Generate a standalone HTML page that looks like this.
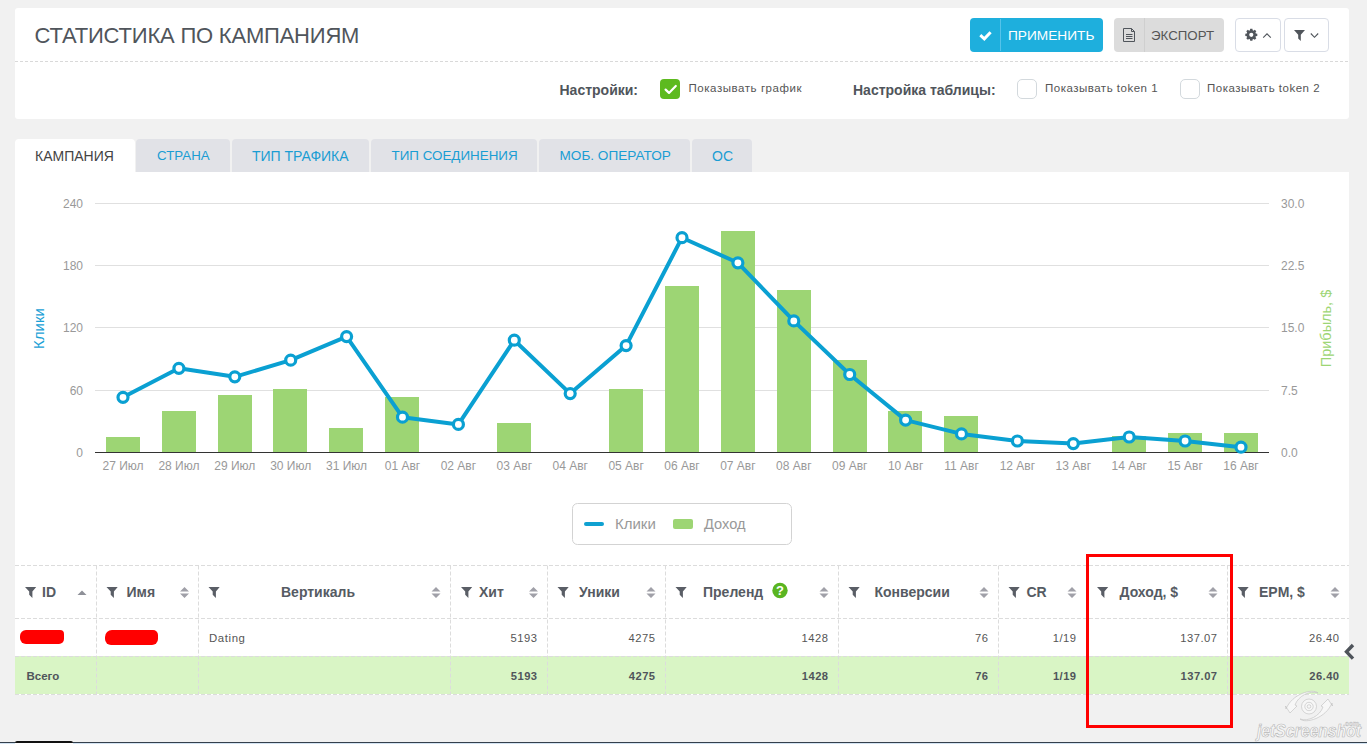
<!DOCTYPE html>
<html><head><meta charset="utf-8">
<style>
*{margin:0;padding:0;box-sizing:border-box}
html,body{width:1367px;height:744px;overflow:hidden}
body{background:#f1f1f1;font-family:"Liberation Sans",sans-serif;position:relative;color:#555}
.a{position:absolute;white-space:nowrap}
.panel{position:absolute;background:#fff}
.t{position:absolute;white-space:nowrap;line-height:1}
</style></head><body>

<!-- top panel -->
<div class="panel" style="left:15px;top:8px;width:1334px;height:111px;border-radius:3px"></div>
<div class="t" style="left:34.5px;top:25px;font-size:22px;letter-spacing:-0.2px;color:#50555b">СТАТИСТИКА ПО КАМПАНИЯМ</div>
<div class="a" style="left:15px;top:61px;width:1334px;height:1px;background-image:linear-gradient(90deg,#d9d9d9 3px,transparent 3px);background-size:5px 1px"></div>

<!-- apply button -->
<div class="a" style="left:970px;top:18px;width:133px;height:34px;background:#1eafdd;border-radius:4px"></div>
<div class="a" style="left:1000px;top:19px;width:1px;height:32px;background:#55c3ea"></div>
<svg class="a" style="left:970px;top:18px" width="30" height="34" viewBox="970 18 30 34"><path d="M980.3 35.2 L984.3 38.8 L990.6 32.2" fill="none" stroke="#fff" stroke-width="3"/></svg>
<div class="t" style="left:1008px;top:29px;font-size:13.7px;color:#fff">ПРИМЕНИТЬ</div>

<!-- export -->
<div class="a" style="left:1114px;top:18px;width:110px;height:34px;background:#dcdcdc;border-radius:4px"></div>
<div class="a" style="left:1144px;top:18px;width:1px;height:34px;background:#cfcfcf"></div>
<svg class="a" style="left:1114px;top:18px" width="30" height="34" viewBox="1114 18 30 34"><path d="M1123.5 28.5 H1131.5 L1134.5 31.5 V41.5 H1123.5 Z M1131.5 28.5 V31.5 H1134.5" fill="none" stroke="#50555b" stroke-width="1"/><path d="M1126 34.5H1132.5M1126 36.5H1132.5M1126 38.5H1132.5" stroke="#50555b" stroke-width="1"/></svg>
<div class="t" style="left:1151px;top:29px;font-size:13.3px;color:#555">ЭКСПОРТ</div>

<!-- gear / filter -->
<div class="a" style="left:1235px;top:18px;width:46px;height:34px;border:1px solid #d9dde6;border-radius:4px;background:#fff"></div>
<div class="a" style="left:1284px;top:18px;width:45px;height:34px;border:1px solid #d9dde6;border-radius:4px;background:#fff"></div>
<svg class="a" style="left:1235px;top:18px" width="94" height="34" viewBox="1235 18 94 34"><path d="M1255.79 33.41 L1257.30 33.71 L1257.30 35.89 L1255.79 36.19 L1255.46 36.99 L1256.32 38.27 L1254.77 39.82 L1253.49 38.96 L1252.69 39.29 L1252.39 40.80 L1250.21 40.80 L1249.91 39.29 L1249.11 38.96 L1247.83 39.82 L1246.28 38.27 L1247.14 36.99 L1246.81 36.19 L1245.30 35.89 L1245.30 33.71 L1246.81 33.41 L1247.14 32.61 L1246.28 31.33 L1247.83 29.78 L1249.11 30.64 L1249.91 30.31 L1250.21 28.80 L1252.39 28.80 L1252.69 30.31 L1253.49 30.64 L1254.77 29.78 L1256.32 31.33 L1255.46 32.61 Z M1253.40 34.80 A2.1 2.1 0 1 0 1249.20 34.80 A2.1 2.1 0 1 0 1253.40 34.80 Z" fill="#50555b" fill-rule="evenodd"/><path d="M1263.2 37.6 L1267 33.8 L1270.8 37.6" fill="none" stroke="#50555b" stroke-width="1.1"/><path d="M1294 30 H1305 L1300.8 34.8 V41 L1298.2 38.6 V34.8 Z" fill="#50555b"/><path d="M1310.8 33.5 L1314.5 37.3 L1318.2 33.5" fill="none" stroke="#50555b" stroke-width="1.1"/></svg>

<!-- settings row -->
<div class="t" style="left:559.5px;top:83px;font-size:14px;font-weight:bold;color:#50555b">Настройки:</div>
<div class="a" style="left:660px;top:79px;width:20px;height:20px;background:#5dba1f;border-radius:4px"></div>
<svg class="a" style="left:660px;top:79px" width="20" height="20" viewBox="0 0 20 20"><path d="M5.6 10.6 L9 13.9 L15.8 7" fill="none" stroke="#fff" stroke-width="2.2" stroke-linecap="round" stroke-linejoin="round"/></svg>
<div class="t" style="left:688.5px;top:82.5px;font-size:11.5px;letter-spacing:0.55px;color:#555">Показывать график</div>

<div class="t" style="left:853px;top:83px;font-size:14px;font-weight:bold;color:#50555b">Настройка таблицы:</div>
<div class="a" style="left:1017px;top:79px;width:20px;height:20px;border:1.3px solid #d3d9dd;border-radius:5px;background:#fff"></div>
<div class="t" style="left:1045px;top:82.5px;font-size:11.5px;letter-spacing:0.5px;color:#555">Показывать token 1</div>
<div class="a" style="left:1180px;top:79px;width:20px;height:20px;border:1.3px solid #d3d9dd;border-radius:5px;background:#fff"></div>
<div class="t" style="left:1207px;top:82.5px;font-size:11.5px;letter-spacing:0.5px;color:#555">Показывать token 2</div>

<!-- tabs -->
<div class="panel" style="left:15px;top:139px;width:119.5px;height:34px;border-radius:4px 4px 0 0"></div>
<div class="t" style="left:35px;top:149px;font-size:14px;color:#444">КАМПАНИЯ</div>
<div class="a" style="left:136px;top:139px;width:94px;height:34px;background:#e1e2e7;border-radius:4px 4px 0 0"></div>
<div class="t" style="left:157px;top:149px;font-size:13.3px;color:#1a9dd3">СТРАНА</div>
<div class="a" style="left:232px;top:139px;width:137px;height:34px;background:#e1e2e7;border-radius:4px 4px 0 0"></div>
<div class="t" style="left:252px;top:149px;font-size:14px;color:#1a9dd3">ТИП ТРАФИКА</div>
<div class="a" style="left:371px;top:139px;width:166px;height:34px;background:#e1e2e7;border-radius:4px 4px 0 0"></div>
<div class="t" style="left:391.5px;top:149px;font-size:13.4px;color:#1a9dd3">ТИП СОЕДИНЕНИЯ</div>
<div class="a" style="left:539px;top:139px;width:150.5px;height:34px;background:#e1e2e7;border-radius:4px 4px 0 0"></div>
<div class="t" style="left:559.5px;top:149px;font-size:13.6px;color:#1a9dd3">МОБ. ОПЕРАТОР</div>
<div class="a" style="left:692px;top:139px;width:60px;height:34px;background:#e1e2e7;border-radius:4px 4px 0 0"></div>
<div class="t" style="left:712px;top:149px;font-size:14px;color:#1a9dd3">ОС</div>

<!-- main panel -->
<div class="panel" style="left:15px;top:172px;width:1334px;height:522px"></div>

<!--CHART-->
<svg class="a" style="left:0;top:0" width="1367" height="560" viewBox="0 0 1367 560">
<line x1="95" x2="1269" y1="203.5" y2="203.5" stroke="#e0e0e0" stroke-width="1"/>
<line x1="95" x2="1269" y1="265.5" y2="265.5" stroke="#e0e0e0" stroke-width="1"/>
<line x1="95" x2="1269" y1="327.5" y2="327.5" stroke="#e0e0e0" stroke-width="1"/>
<line x1="95" x2="1269" y1="390.5" y2="390.5" stroke="#e0e0e0" stroke-width="1"/>
<rect x="106" y="437" width="34" height="15" fill="#9dd574"/>
<rect x="162" y="411" width="34" height="41" fill="#9dd574"/>
<rect x="218" y="395" width="34" height="57" fill="#9dd574"/>
<rect x="273" y="389" width="34" height="63" fill="#9dd574"/>
<rect x="329" y="428" width="34" height="24" fill="#9dd574"/>
<rect x="385" y="397" width="34" height="55" fill="#9dd574"/>
<rect x="497" y="423" width="34" height="29" fill="#9dd574"/>
<rect x="609" y="389" width="34" height="63" fill="#9dd574"/>
<rect x="665" y="286" width="34" height="166" fill="#9dd574"/>
<rect x="721" y="231" width="34" height="221" fill="#9dd574"/>
<rect x="777" y="290" width="34" height="162" fill="#9dd574"/>
<rect x="833" y="360" width="34" height="92" fill="#9dd574"/>
<rect x="888" y="411" width="34" height="41" fill="#9dd574"/>
<rect x="944" y="416" width="34" height="36" fill="#9dd574"/>
<rect x="1112" y="436" width="34" height="16" fill="#9dd574"/>
<rect x="1168" y="433" width="34" height="19" fill="#9dd574"/>
<rect x="1224" y="433" width="34" height="19" fill="#9dd574"/>
<line x1="95" x2="1269" y1="452.5" y2="452.5" stroke="#333" stroke-width="1"/>
<path d="M123.0 397.3 L178.9 368.3 L234.8 376.8 L290.7 360.2 L346.6 336.6 L402.5 417.2 L458.4 424.4 L514.3 340.2 L570.2 393.6 L626.1 345.6 L682.0 237.7 L737.9 262.8 L793.8 320.9 L849.7 374.5 L905.6 420.1 L961.5 433.9 L1017.4 441.0 L1073.3 443.6 L1129.2 437.0 L1185.1 441.0 L1241.0 447.2" fill="none" stroke="#0aa0d2" stroke-width="4" stroke-linejoin="round" stroke-linecap="round"/>
<circle cx="123.0" cy="397.3" r="5" fill="#fff" stroke="#0aa0d2" stroke-width="3.2"/>
<circle cx="178.9" cy="368.3" r="5" fill="#fff" stroke="#0aa0d2" stroke-width="3.2"/>
<circle cx="234.8" cy="376.8" r="5" fill="#fff" stroke="#0aa0d2" stroke-width="3.2"/>
<circle cx="290.7" cy="360.2" r="5" fill="#fff" stroke="#0aa0d2" stroke-width="3.2"/>
<circle cx="346.6" cy="336.6" r="5" fill="#fff" stroke="#0aa0d2" stroke-width="3.2"/>
<circle cx="402.5" cy="417.2" r="5" fill="#fff" stroke="#0aa0d2" stroke-width="3.2"/>
<circle cx="458.4" cy="424.4" r="5" fill="#fff" stroke="#0aa0d2" stroke-width="3.2"/>
<circle cx="514.3" cy="340.2" r="5" fill="#fff" stroke="#0aa0d2" stroke-width="3.2"/>
<circle cx="570.2" cy="393.6" r="5" fill="#fff" stroke="#0aa0d2" stroke-width="3.2"/>
<circle cx="626.1" cy="345.6" r="5" fill="#fff" stroke="#0aa0d2" stroke-width="3.2"/>
<circle cx="682.0" cy="237.7" r="5" fill="#fff" stroke="#0aa0d2" stroke-width="3.2"/>
<circle cx="737.9" cy="262.8" r="5" fill="#fff" stroke="#0aa0d2" stroke-width="3.2"/>
<circle cx="793.8" cy="320.9" r="5" fill="#fff" stroke="#0aa0d2" stroke-width="3.2"/>
<circle cx="849.7" cy="374.5" r="5" fill="#fff" stroke="#0aa0d2" stroke-width="3.2"/>
<circle cx="905.6" cy="420.1" r="5" fill="#fff" stroke="#0aa0d2" stroke-width="3.2"/>
<circle cx="961.5" cy="433.9" r="5" fill="#fff" stroke="#0aa0d2" stroke-width="3.2"/>
<circle cx="1017.4" cy="441.0" r="5" fill="#fff" stroke="#0aa0d2" stroke-width="3.2"/>
<circle cx="1073.3" cy="443.6" r="5" fill="#fff" stroke="#0aa0d2" stroke-width="3.2"/>
<circle cx="1129.2" cy="437.0" r="5" fill="#fff" stroke="#0aa0d2" stroke-width="3.2"/>
<circle cx="1185.1" cy="441.0" r="5" fill="#fff" stroke="#0aa0d2" stroke-width="3.2"/>
<circle cx="1241.0" cy="447.2" r="5" fill="#fff" stroke="#0aa0d2" stroke-width="3.2"/>
<text x="83" y="208.0" text-anchor="end" font-size="12" fill="#999">240</text>
<text x="1281" y="208.0" font-size="12" fill="#999">30.0</text>
<text x="83" y="270.0" text-anchor="end" font-size="12" fill="#999">180</text>
<text x="1281" y="270.0" font-size="12" fill="#999">22.5</text>
<text x="83" y="332.0" text-anchor="end" font-size="12" fill="#999">120</text>
<text x="1281" y="332.0" font-size="12" fill="#999">15.0</text>
<text x="83" y="395.0" text-anchor="end" font-size="12" fill="#999">60</text>
<text x="1281" y="395.0" font-size="12" fill="#999">7.5</text>
<text x="83" y="457.0" text-anchor="end" font-size="12" fill="#999">0</text>
<text x="1281" y="457.0" font-size="12" fill="#999">0.0</text>
<text x="123.0" y="469.5" text-anchor="middle" font-size="12" fill="#999">27 Июл</text>
<text x="178.9" y="469.5" text-anchor="middle" font-size="12" fill="#999">28 Июл</text>
<text x="234.8" y="469.5" text-anchor="middle" font-size="12" fill="#999">29 Июл</text>
<text x="290.7" y="469.5" text-anchor="middle" font-size="12" fill="#999">30 Июл</text>
<text x="346.6" y="469.5" text-anchor="middle" font-size="12" fill="#999">31 Июл</text>
<text x="402.5" y="469.5" text-anchor="middle" font-size="12" fill="#999">01 Авг</text>
<text x="458.4" y="469.5" text-anchor="middle" font-size="12" fill="#999">02 Авг</text>
<text x="514.3" y="469.5" text-anchor="middle" font-size="12" fill="#999">03 Авг</text>
<text x="570.2" y="469.5" text-anchor="middle" font-size="12" fill="#999">04 Авг</text>
<text x="626.1" y="469.5" text-anchor="middle" font-size="12" fill="#999">05 Авг</text>
<text x="682.0" y="469.5" text-anchor="middle" font-size="12" fill="#999">06 Авг</text>
<text x="737.9" y="469.5" text-anchor="middle" font-size="12" fill="#999">07 Авг</text>
<text x="793.8" y="469.5" text-anchor="middle" font-size="12" fill="#999">08 Авг</text>
<text x="849.7" y="469.5" text-anchor="middle" font-size="12" fill="#999">09 Авг</text>
<text x="905.6" y="469.5" text-anchor="middle" font-size="12" fill="#999">10 Авг</text>
<text x="961.5" y="469.5" text-anchor="middle" font-size="12" fill="#999">11 Авг</text>
<text x="1017.4" y="469.5" text-anchor="middle" font-size="12" fill="#999">12 Авг</text>
<text x="1073.3" y="469.5" text-anchor="middle" font-size="12" fill="#999">13 Авг</text>
<text x="1129.2" y="469.5" text-anchor="middle" font-size="12" fill="#999">14 Авг</text>
<text x="1185.1" y="469.5" text-anchor="middle" font-size="12" fill="#999">15 Авг</text>
<text x="1241.0" y="469.5" text-anchor="middle" font-size="12" fill="#999">16 Авг</text>
<text transform="translate(43.5 328.5) rotate(-90)" text-anchor="middle" font-size="15" fill="#1aa1d6">Клики</text>
<text transform="translate(1331 328.5) rotate(-90)" text-anchor="middle" font-size="14.5" fill="#9dd574">Прибыль, $</text>
<rect x="572.5" y="503.5" width="219" height="41" rx="5" fill="#fff" stroke="#d3d3d3"/>
<line x1="586" x2="602" y1="524" y2="524" stroke="#0fa1d1" stroke-width="4" stroke-linecap="round"/>
<text x="615" y="529" font-size="15" fill="#999">Клики</text>
<rect x="673" y="519" width="20" height="10" rx="2" fill="#9dd574"/>
<text x="704" y="529" font-size="14.6" fill="#999">Доход</text>
</svg>
<!--/CHART--><!--/CHART--><!--/CHART-->

<!--TABLE-->
<div class="a" style="left:15px;top:656px;width:1334px;height:38px;background:#d9f5c5"></div>
<svg class="a" style="left:0;top:555px" width="1367" height="150" viewBox="0 555 1367 150">
<line x1="15" x2="1349" y1="565.5" y2="565.5" stroke="#dcdcdc" stroke-dasharray="4 2"/>
<line x1="15" x2="1349" y1="618.5" y2="618.5" stroke="#dcdcdc" stroke-dasharray="4 2"/>
<line x1="15" x2="1349" y1="656.5" y2="656.5" stroke="#dcdcdc" stroke-dasharray="4 2"/>
<line x1="15" x2="1349" y1="694.5" y2="694.5" stroke="#fff"/>
<line x1="15" x2="1349" y1="694.5" y2="694.5" stroke="#dcdcdc" stroke-dasharray="4 2"/>
<line x1="96.5" x2="96.5" y1="565.5" y2="695" stroke="#dcdcdc" stroke-dasharray="4 2"/>
<line x1="198.5" x2="198.5" y1="565.5" y2="695" stroke="#dcdcdc" stroke-dasharray="4 2"/>
<line x1="450.5" x2="450.5" y1="565.5" y2="695" stroke="#dcdcdc" stroke-dasharray="4 2"/>
<line x1="547.5" x2="547.5" y1="565.5" y2="695" stroke="#dcdcdc" stroke-dasharray="4 2"/>
<line x1="665.5" x2="665.5" y1="565.5" y2="695" stroke="#dcdcdc" stroke-dasharray="4 2"/>
<line x1="838.5" x2="838.5" y1="565.5" y2="695" stroke="#dcdcdc" stroke-dasharray="4 2"/>
<line x1="998.5" x2="998.5" y1="565.5" y2="695" stroke="#dcdcdc" stroke-dasharray="4 2"/>
<line x1="1087.5" x2="1087.5" y1="565.5" y2="695" stroke="#dcdcdc" stroke-dasharray="4 2"/>
<line x1="1227.5" x2="1227.5" y1="565.5" y2="695" stroke="#dcdcdc" stroke-dasharray="4 2"/>
<path transform="translate(25.0 587)" d="M0 0 H11.2 L7.4 4.6 V11 L4.2 7.8 V4.6 Z" fill="#5a5e66"/>
<path transform="translate(106.5 587)" d="M0 0 H11.2 L7.4 4.6 V11 L4.2 7.8 V4.6 Z" fill="#5a5e66"/>
<path transform="translate(208.5 587)" d="M0 0 H11.2 L7.4 4.6 V11 L4.2 7.8 V4.6 Z" fill="#5a5e66"/>
<path transform="translate(461.0 587)" d="M0 0 H11.2 L7.4 4.6 V11 L4.2 7.8 V4.6 Z" fill="#5a5e66"/>
<path transform="translate(557.5 587)" d="M0 0 H11.2 L7.4 4.6 V11 L4.2 7.8 V4.6 Z" fill="#5a5e66"/>
<path transform="translate(675.5 587)" d="M0 0 H11.2 L7.4 4.6 V11 L4.2 7.8 V4.6 Z" fill="#5a5e66"/>
<path transform="translate(848.5 587)" d="M0 0 H11.2 L7.4 4.6 V11 L4.2 7.8 V4.6 Z" fill="#5a5e66"/>
<path transform="translate(1008.5 587)" d="M0 0 H11.2 L7.4 4.6 V11 L4.2 7.8 V4.6 Z" fill="#5a5e66"/>
<path transform="translate(1097.0 587)" d="M0 0 H11.2 L7.4 4.6 V11 L4.2 7.8 V4.6 Z" fill="#5a5e66"/>
<path transform="translate(1237.5 587)" d="M0 0 H11.2 L7.4 4.6 V11 L4.2 7.8 V4.6 Z" fill="#5a5e66"/>
<path transform="translate(180 587)" d="M0 4.5 L4.5 0 L9 4.5 Z M0 6.5 L4.5 11 L9 6.5 Z" fill="#a0a0a8"/>
<path transform="translate(431.5 587)" d="M0 4.5 L4.5 0 L9 4.5 Z M0 6.5 L4.5 11 L9 6.5 Z" fill="#a0a0a8"/>
<path transform="translate(529 587)" d="M0 4.5 L4.5 0 L9 4.5 Z M0 6.5 L4.5 11 L9 6.5 Z" fill="#a0a0a8"/>
<path transform="translate(646.5 587)" d="M0 4.5 L4.5 0 L9 4.5 Z M0 6.5 L4.5 11 L9 6.5 Z" fill="#a0a0a8"/>
<path transform="translate(819.5 587)" d="M0 4.5 L4.5 0 L9 4.5 Z M0 6.5 L4.5 11 L9 6.5 Z" fill="#a0a0a8"/>
<path transform="translate(979.5 587)" d="M0 4.5 L4.5 0 L9 4.5 Z M0 6.5 L4.5 11 L9 6.5 Z" fill="#a0a0a8"/>
<path transform="translate(1067.5 587)" d="M0 4.5 L4.5 0 L9 4.5 Z M0 6.5 L4.5 11 L9 6.5 Z" fill="#a0a0a8"/>
<path transform="translate(1208.5 587)" d="M0 4.5 L4.5 0 L9 4.5 Z M0 6.5 L4.5 11 L9 6.5 Z" fill="#a0a0a8"/>
<path transform="translate(1330.5 587)" d="M0 4.5 L4.5 0 L9 4.5 Z M0 6.5 L4.5 11 L9 6.5 Z" fill="#a0a0a8"/>
<path transform="translate(77.5 590)" d="M0 5 L4.5 0.5 L9 5 Z" fill="#8e9098"/>
<circle cx="780" cy="590.5" r="7.7" fill="#5ab521"/>
<text x="780" y="595.3" text-anchor="middle" font-size="13" font-weight="bold" fill="#fff">?</text>
</svg>
<div class="t" style="left:42px;top:585px;font-size:14px;font-weight:bold;color:#565b63">ID</div>
<div class="t" style="left:126.5px;top:585px;font-size:14px;font-weight:bold;color:#565b63">Имя</div>
<div class="t" style="left:281px;top:585px;font-size:14px;font-weight:bold;color:#565b63">Вертикаль</div>
<div class="t" style="left:479px;top:585px;font-size:14px;font-weight:bold;color:#565b63">Хит</div>
<div class="t" style="left:579px;top:585px;font-size:14px;font-weight:bold;color:#565b63">Уники</div>
<div class="t" style="left:703px;top:585px;font-size:14px;font-weight:bold;color:#565b63">Преленд</div>
<div class="t" style="left:874.5px;top:585px;font-size:14px;font-weight:bold;color:#565b63">Конверсии</div>
<div class="t" style="left:1026.5px;top:585px;font-size:14px;font-weight:bold;color:#565b63">CR</div>
<div class="t" style="left:1119.5px;top:585px;font-size:14px;font-weight:bold;color:#565b63">Доход, $</div>
<div class="t" style="left:1259px;top:585px;font-size:14px;font-weight:bold;color:#565b63">EPM, $</div>
<div class="t" style="left:209px;top:632.5px;font-size:11.4px;letter-spacing:0.6px;color:#555">Dating</div>
<div class="t" style="right:829.5px;top:632.8px;font-size:11.2px;letter-spacing:0.5px;color:#555">5193</div>
<div class="t" style="right:829.5px;top:671px;font-size:11.2px;letter-spacing:0.45px;font-weight:bold;color:#50555b">5193</div>
<div class="t" style="right:711.5px;top:632.8px;font-size:11.2px;letter-spacing:0.5px;color:#555">4275</div>
<div class="t" style="right:711.5px;top:671px;font-size:11.2px;letter-spacing:0.45px;font-weight:bold;color:#50555b">4275</div>
<div class="t" style="right:538.5px;top:632.8px;font-size:11.2px;letter-spacing:0.5px;color:#555">1428</div>
<div class="t" style="right:538.5px;top:671px;font-size:11.2px;letter-spacing:0.45px;font-weight:bold;color:#50555b">1428</div>
<div class="t" style="right:378.5px;top:632.8px;font-size:11.2px;letter-spacing:0.5px;color:#555">76</div>
<div class="t" style="right:378.5px;top:671px;font-size:11.2px;letter-spacing:0.45px;font-weight:bold;color:#50555b">76</div>
<div class="t" style="right:290.5px;top:632.8px;font-size:11.2px;letter-spacing:0.5px;color:#555">1/19</div>
<div class="t" style="right:290.5px;top:671px;font-size:11.2px;letter-spacing:0.45px;font-weight:bold;color:#50555b">1/19</div>
<div class="t" style="right:149.5px;top:632.8px;font-size:11.2px;letter-spacing:0.5px;color:#555">137.07</div>
<div class="t" style="right:149.5px;top:671px;font-size:11.2px;letter-spacing:0.45px;font-weight:bold;color:#50555b">137.07</div>
<div class="t" style="right:27.5px;top:632.8px;font-size:11.2px;letter-spacing:0.5px;color:#555">26.40</div>
<div class="t" style="right:27.5px;top:671px;font-size:11.2px;letter-spacing:0.45px;font-weight:bold;color:#50555b">26.40</div>
<div class="t" style="left:26.5px;top:670.5px;font-size:11.5px;font-weight:bold;color:#50555b">Всего</div>
<div class="a" style="left:20px;top:630px;width:44px;height:14px;background:#f00;border-radius:6px 4px 5px 6px"></div>
<div class="a" style="left:105px;top:630px;width:53px;height:15px;background:#f00;border-radius:7px 5px 6px 6px"></div>
<svg class="a" style="left:1342.5px;top:643px" width="13" height="18" viewBox="0 0 13 18"><path d="M10 2 L3.5 8.8 L10 15.6" fill="none" stroke="#4f545b" stroke-width="3.4"/></svg>
<div class="a" style="left:1086px;top:554px;width:147px;height:174px;border:3px solid #f00"></div>
<!--/TABLE--><!--/TABLE--><!--/TABLE--><!--/TABLE--><!--/TABLE--><!--/TABLE--><!--/TABLE--><!--/TABLE--><!--/TABLE-->

<!--WM-->
<svg class="a" style="left:1240px;top:680px" width="127" height="64" viewBox="1240 680 127 64">
<g fill="#f7f7f7" stroke="#bdbdbd" stroke-width="0.6">
<path d="M1286 709 C1292 694 1312 688 1318 693 C1310 690 1298 696 1295 705 L1297 706 L1290 713 L1285.5 706 Z"/>
<path d="M1332 703 C1326 718 1306 724 1300 719 C1308 722 1320 716 1323 707 L1321 706 L1328 699 L1332.5 706 Z"/>
<circle cx="1309" cy="706.5" r="7.5"/>
<circle cx="1309" cy="706.5" r="4.2"/>
<circle cx="1309" cy="706.5" r="1.8"/>
</g>
<text x="1257" y="737" font-size="19" font-weight="bold" font-style="italic" textLength="104" lengthAdjust="spacingAndGlyphs" fill="#f8f8f8" stroke="#b8b8b8" stroke-width="0.7">jetScreenshot</text>
<text x="1343" y="725.8" font-size="7" font-weight="bold" fill="#f8f8f8" stroke="#b8b8b8" stroke-width="0.4">.com</text>
</svg>
<div class="a" style="left:0;top:742px;width:1367px;height:1px;background:#34404c"></div>
<div class="a" style="left:0;top:743px;width:1367px;height:1px;background:#d3e3f2"></div>
<div class="a" style="left:15px;top:741px;width:58px;height:3px;background:#fff;border-top:2px solid #111;border-radius:2px 2px 0 0"></div>
<!--/WM-->
</body></html>
